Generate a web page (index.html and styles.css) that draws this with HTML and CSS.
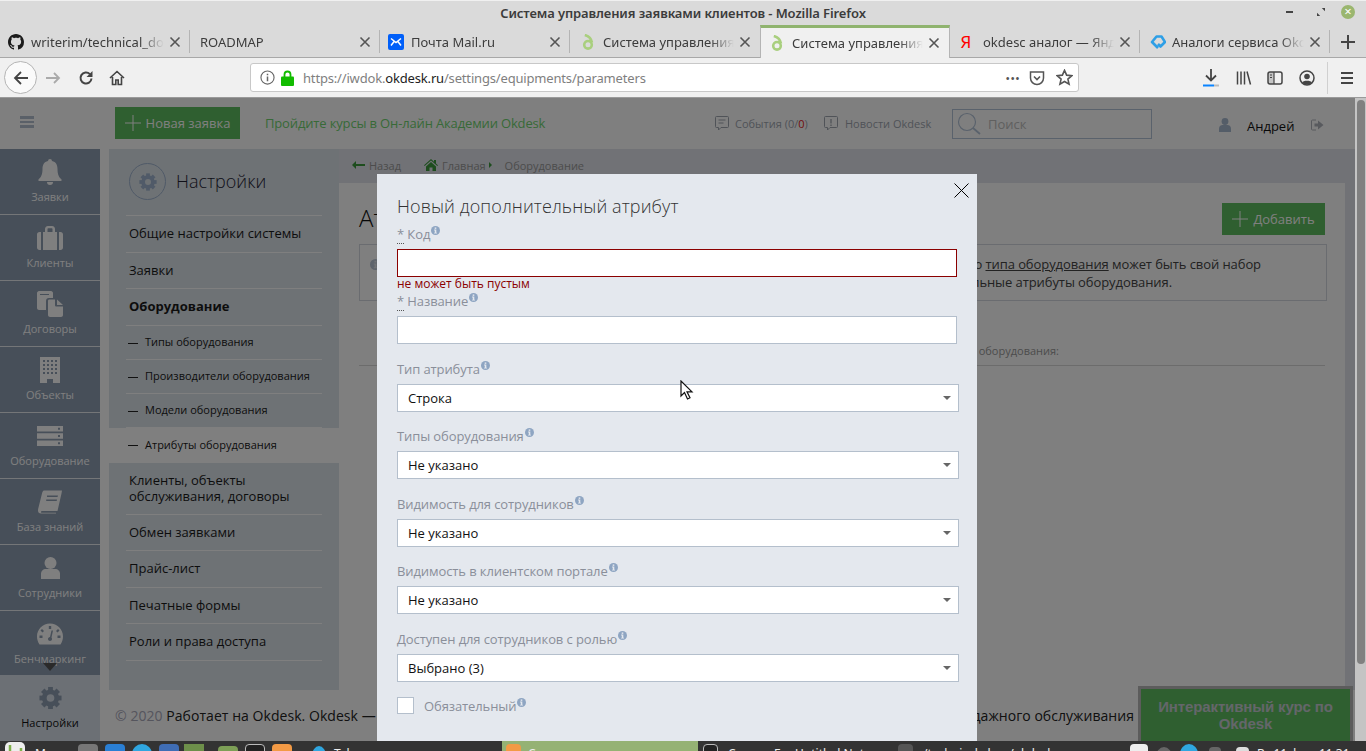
FILE: index.html
```html
<!DOCTYPE html>
<html lang="ru">
<head>
<meta charset="utf-8">
<title>Система управления заявками клиентов</title>
<link rel="stylesheet" href="styles.css">
</head>
<body>

<svg class="defs" width="0" height="0">
	<symbol id="i-info" viewBox="0 0 10 10"><circle cx="5" cy="5" r="5" fill="currentColor"/><rect x="4.1" y="1.6" width="1.8" height="1.6" fill="#e4e8ee"/><path d="M3.4 4h2.5v3.4h.8v1H3.400v-1h.8V5h-.8z" fill="#e4e8ee"/></symbol>
	<symbol id="i-gear" viewBox="0 0 24 24">
		<circle cx="12" cy="12" r="6.500" fill="none" stroke="currentColor" stroke-width="5"/>
		<g fill="currentColor">
			<rect x="9.500" y="0.500" width="5" height="5"/>
			<rect x="9.500" y="18.500" width="5" height="5"/>
			<rect x="0.500" y="9.500" width="5" height="5"/>
			<rect x="18.500" y="9.500" width="5" height="5"/>
			<rect x="9.500" y="0.500" width="5" height="5" transform="rotate(45 12 12)"/>
			<rect x="9.500" y="18.500" width="5" height="5" transform="rotate(45 12 12)"/>
			<rect x="0.500" y="9.500" width="5" height="5" transform="rotate(45 12 12)"/>
			<rect x="18.500" y="9.500" width="5" height="5" transform="rotate(45 12 12)"/>
		</g>
	</symbol>
	<symbol id="i-okdesk" viewBox="0 0 16 16"><circle cx="8" cy="10.800" r="3.800" fill="none" stroke="#a9cf7e" stroke-width="2.600"/><path d="M4.800 1c3.600 1 6.300 3 7.200 7.500" fill="none" stroke="#a9cf7e" stroke-width="2.600"/></symbol>
	<symbol id="i-close" viewBox="0 0 12 12"><path d="M1.500 1.500l9 9M10.500 1.500l-9 9" stroke="#555" stroke-width="1.600" fill="none"/></symbol>
	<symbol id="i-plus" viewBox="0 0 16 16"><path d="M8 0v16M0 8h16" stroke="currentColor" stroke-width="1" fill="none"/></symbol>
</svg>

<div class="titlebar">
	<span class="title-text">Система управления заявками клиентов - Mozilla Firefox</span>
	<div class="wm-btns">
		<span class="wm-min"></span>
		<svg class="wm-max" width="10" height="10" viewBox="0 0 10 10"><path d="M6 0h4v4zM0 6l4 4H0z" fill="#444"/></svg>
		<span class="wm-close">×</span>
	</div>
</div>

<div class="tabstrip">
	<div class="tab">
		<svg class="fav" viewBox="0 0 16 16"><path fill="#1b1b1b" d="M8 0C3.580 0 0 3.580 0 8c0 3.540 2.290 6.530 5.470 7.590.4.070.55-.17.55-.38 0-.19-.01-.82-.01-1.490-2.010.37-2.530-.49-2.690-.94-.09-.23-.48-.94-.82-1.130-.28-.15-.68-.52-.01-.53.63-.01 1.080.58 1.230.82.72 1.210 1.870.87 2.330.66.070-.52.28-.87.51-1.070-1.780-.2-3.640-.89-3.640-3.950 0-.87.31-1.590.82-2.150-.08-.2-.36-1.020.08-2.120 0 0 .67-.21 2.200.82.64-.18 1.320-.27 2-.27s1.360.09 2 .27c1.530-1.040 2.200-.82 2.200-.82.44 1.100.16 1.920.08 2.120.51.56.82 1.270.82 2.150 0 3.070-1.870 3.750-3.650 3.950.29.25.54.73.54 1.480 0 1.070-.01 1.930-.01 2.200 0 .21.15.46.55.38A8.010 8.010 0 0 0 16 8c0-4.420-3.580-8-8-8z"/></svg>
		<span class="tab-title">writerim/technical_docs</span>
		<svg class="tab-x"><use href="#i-close"/></svg>
	</div>
	<div class="tab tab-plain">
		<span class="tab-title">ROADMAP</span>
		<svg class="tab-x"><use href="#i-close"/></svg>
	</div>
	<div class="tab">
		<svg class="fav" viewBox="0 0 16 16"><rect width="16" height="16" rx="2" fill="#005ff9"/><path d="M3 4.500L8 8.500l5-4M3 11.500L6.500 7M13 11.500L9.500 7" stroke="#fff" stroke-width="1.500" fill="none"/></svg>
		<span class="tab-title">Почта Mail.ru</span>
		<svg class="tab-x"><use href="#i-close"/></svg>
	</div>
	<div class="tab tab-pre">
		<svg class="fav"><use href="#i-okdesk"/></svg>
		<span class="tab-title">Система управления заявками</span>
		<svg class="tab-x"><use href="#i-close"/></svg>
	</div>
	<div class="tab tab-active">
		<svg class="fav"><use href="#i-okdesk"/></svg>
		<span class="tab-title">Система управления заявками</span>
		<svg class="tab-x"><use href="#i-close"/></svg>
	</div>
	<div class="tab tab-post">
		<span class="fav fav-ya">Я</span>
		<span class="tab-title">okdesc аналог — Яндекс</span>
		<svg class="tab-x"><use href="#i-close"/></svg>
	</div>
	<div class="tab tab-last">
		<svg class="fav" viewBox="0 0 16 16"><path d="M8 14L2 8l4.500-5.500h5L15 8l-4.500 4.500L8 10" stroke="#2e9fe6" stroke-width="2.600" stroke-linejoin="round" fill="none"/></svg>
		<span class="tab-title">Аналоги сервиса Okdesk</span>
		<svg class="tab-x"><use href="#i-close"/></svg>
	</div>
	<div class="tab-new"><svg width="14" height="14" viewBox="0 0 14 14"><path d="M7 0v14M0 7h14" stroke="#444" stroke-width="2"/></svg></div>
</div>

<div class="navbar">
	<div class="nav-back"><svg width="18" height="18" viewBox="0 0 18 18"><path d="M16 9H3M9 3L3 9l6 6" stroke="#444" stroke-width="1.800" fill="none"/></svg></div>
	<svg class="nav-fwd" width="16" height="16" viewBox="0 0 16 16"><path d="M1 8h13M9 3l5 5-5 5" stroke="#aaa" stroke-width="1.800" fill="none"/></svg>
	<svg class="nav-reload" width="16" height="16" viewBox="0 0 16 16"><path d="M13.500 8.500a5.500 5.500 0 1 1-1.600-4.400" stroke="#444" stroke-width="2" fill="none"/><path d="M14.500 1v6h-6z" fill="#444"/></svg>
	<svg class="nav-home" width="16" height="16" viewBox="0 0 16 16"><path d="M1 8l7-6.500L15 8M3.500 7v7.500h3.300V10h2.400v4.500h3.300V7" stroke="#444" stroke-width="1.600" fill="none"/></svg>
	<div class="urlbar">
		<svg width="15" height="15" viewBox="0 0 16 16"><circle cx="8" cy="8" r="7" stroke="#666" stroke-width="1.200" fill="none"/><path d="M7.200 7h1.600v5H7.200zM7.200 4h1.600v1.600H7.200z" fill="#666"/></svg>
		<svg class="lock" width="13" height="16" viewBox="0 0 13 16"><path d="M3.500 7V4.500a3 3 0 0 1 6 0V7" stroke="#12bc00" stroke-width="1.800" fill="none"/><rect y="6.500" width="13" height="9.500" rx="1" fill="#12bc00"/></svg>
		<span class="url-text">https://iwdok.<b>okdesk.ru</b>/settings/equipments/parameters</span>
		<span class="url-dots">•••</span>
		<svg class="pocket" width="16" height="16" viewBox="0 0 16 16"><path d="M1.500 2h13v6a6.500 6.500 0 0 1-13 0z" stroke="#555" stroke-width="1.500" fill="none"/><path d="M5 6.500l3 3 3-3" stroke="#555" stroke-width="1.600" fill="none"/></svg>
		<svg class="star" width="17" height="17" viewBox="0 0 16 16"><path d="M8 1.300l2 4.500 4.900.5-3.700 3.200 1.100 4.800L8 11.800l-4.300 2.500 1.100-4.800L1.100 6.300 6 5.800z" stroke="#555" stroke-width="1.500" fill="none"/></svg>
	</div>
	<svg class="nav-dl" width="16" height="20" viewBox="0 0 16 20"><path d="M8 1v11M3 7.500l5 5 5-5" stroke="#444" stroke-width="1.800" fill="none"/><rect y="16.500" width="11" height="2" fill="#0a84ff"/><rect x="11" y="16.500" width="5" height="2" fill="#bbb"/></svg>
	<svg class="nav-lib" width="16" height="16" viewBox="0 0 16 16"><path d="M1.500 1.500v13M5 1.500v13M8.500 1.500v13M11 1.500l3.500 13" stroke="#444" stroke-width="1.500" fill="none"/></svg>
	<svg class="nav-side" width="16" height="16" viewBox="0 0 16 16"><rect x="1" y="2" width="14" height="12" rx="2" stroke="#444" stroke-width="1.500" fill="none"/><rect x="1" y="2" width="6" height="12" fill="#444" fill-opacity=".25"/><path d="M7 2v12M3 5h2M3 7.500h2" stroke="#444" stroke-width="1.200"/></svg>
	<svg class="nav-acct" width="16" height="16" viewBox="0 0 16 16"><circle cx="8" cy="8" r="7" stroke="#444" stroke-width="1.500" fill="none"/><circle cx="8" cy="6.500" r="2.800" fill="#444"/><path d="M3 12.500c1-2.500 9-2.500 10 0a6.500 6.500 0 0 1-10 0z" fill="#444"/></svg>
	<span class="nav-div"></span>
	<svg class="nav-menu" width="16" height="16" viewBox="0 0 16 16"><path d="M2 3h12M2 8h12M2 13h12" stroke="#444" stroke-width="1.800"/></svg>
</div>

<div class="page">
	<div class="app">
		<header class="topbar">
			<div class="burger"><i></i><i></i><i></i></div>
			<a class="btn btn-new"><svg width="16" height="16"><use href="#i-plus"/></svg>Новая заявка</a>
			<a class="promo">Пройдите курсы в Он-лайн Академии Okdesk</a>
			<a class="top-link top-events">
				<svg width="14" height="15" viewBox="0 0 14 15"><path d="M1.500.5h11a1 1 0 0 1 1 1v9a1 1 0 0 1-1 1H6l-2.500 2.500v-2.500h-2a1 1 0 0 1-1-1v-9a1 1 0 0 1 1-1z" stroke="currentColor" fill="none"/><path d="M3.500 4h7M3.500 7h5" stroke="currentColor"/></svg>
				<span>События (0/<em>0</em>)</span>
			</a>
			<a class="top-link top-news">
				<svg width="14" height="15" viewBox="0 0 14 15"><path d="M1.500.5h11a1 1 0 0 1 1 1v9a1 1 0 0 1-1 1H6l-2.500 2.500v-2.500h-2a1 1 0 0 1-1-1v-9a1 1 0 0 1 1-1z" stroke="currentColor" fill="none"/><path d="M7 3v4.500M7 8.500V10" stroke="currentColor" stroke-width="1.300"/></svg>
				<span>Новости Okdesk</span>
			</a>
			<div class="search">
				<svg width="26" height="26" viewBox="0 0 26 26"><circle cx="11" cy="11" r="8.500" stroke="currentColor" stroke-width="1.200" fill="none"/><path d="M17 17l7 6" stroke="currentColor" stroke-width="1.800"/></svg>
				<span>Поиск</span>
			</div>
			<svg class="top-user" width="12" height="14" viewBox="0 0 12 14"><circle cx="6" cy="3.500" r="3.400" fill="currentColor"/><path d="M0 14v-3.500C0 8 2 7 3.500 7h5C10 7 12 8 12 10.500V14z" fill="currentColor"/></svg>
			<span class="top-name">Андрей</span>
			<svg class="top-exit" width="13" height="12" viewBox="0 0 13 12"><path d="M5 1H1.500a1 1 0 0 0-1 1v8a1 1 0 0 0 1 1H5" stroke="currentColor" fill="none"/><path d="M3.500 4.500H7V1.500L12.500 6 7 10.500v-3H3.500z" fill="currentColor"/></svg>
		</header>

		<div class="layout">
			<nav class="rail">
				<a class="rail-item">
					<svg class="rail-ico" width="24" height="26" viewBox="0 0 24 26"><path d="M12 0a2 2 0 0 1 2 2c4 .8 5.500 4 5.500 8 0 6 1.500 8 4 10.500.4.500.1 1.500-.6 1.500H1.100c-.7 0-1-1-.6-1.500C3 18 4.500 16 4.500 10c0-4 1.500-7.200 5.500-8a2 2 0 0 1 2-2zM9 23a3 3 0 0 0 6 0z"/></svg>
					<span>Заявки</span>
				</a>
				<a class="rail-item">
					<svg class="rail-ico" width="26" height="24" viewBox="0 0 26 24"><path d="M8 6V3c0-1.500 1-3 3-3h4c2 0 3 1.500 3 3v3h-2.500V3c0-.5-.200-.7-.7-.7h-3.600c-.5 0-.7.200-.7.700v3zM6 6h14v18H6zM0 8.500C0 7 1 6 2.500 6H4v18H2.500C1 24 0 23 0 21.500zM22 6h1.500C25 6 26 7 26 8.500v13c0 1.500-1 2.500-2.500 2.500H22z"/></svg>
					<span>Клиенты</span>
				</a>
				<a class="rail-item">
					<svg class="rail-ico" width="26" height="26" viewBox="0 0 26 26"><path d="M2 0h12c1 0 2 1 2 2v5h-4c-2 0-3 1-3 3v9H2c-1 0-2-1-2-2V2C0 1 1 0 2 0z"/><path d="M11 10c0-1 .5-1.500 1.500-1.500H18V14c0 1 .5 1.500 1.500 1.500H26V24c0 1-1 2-2 2H13c-1 0-2-1-2-2zM20 8.500l6 5.500h-6z"/><path d="M3 3h9v1H3z" fill="#8e9eb2"/></svg>
					<span>Договоры</span>
				</a>
				<a class="rail-item">
					<svg class="rail-ico" width="20" height="26" viewBox="0 0 20 26"><path fill-rule="evenodd" d="M0 0h20v26h-7v-4H7v4H0zM3 3v2h2V3zm4 0v2h2V3zm4 0v2h2V3zm4 0v2h2V3zM3 7v2h2V7zm4 0v2h2V7zm4 0v2h2V7zm4 0v2h2V7zM3 11v2h2v-2zm4 0v2h2v-2zm4 0v2h2v-2zm4 0v2h2v-2zM3 15v2h2v-2zm4 0v2h2v-2zm4 0v2h2v-2zm4 0v2h2v-2z"/></svg>
					<span>Объекты</span>
				</a>
				<a class="rail-item">
					<svg class="rail-ico" width="26" height="20" viewBox="0 0 26 20"><path fill-rule="evenodd" d="M0 0h26v5.500H0zm21 1.800v2h2v-2zM0 7.200h26v5.500H0zm21 1.800v2h2V9zM0 14.500h26V20H0zm21 1.800v2h2v-2z"/></svg>
					<span>Оборудование</span>
				</a>
				<a class="rail-item">
					<svg class="rail-ico" width="24" height="23" viewBox="0 0 24 23"><path fill-rule="evenodd" d="M6 0h18l-.5 3-4 17.500H4.500c-1 0-1.500.3-1.500 1s.5.800 1.500.800H18V23H3c-2 0-3-1-3-3 0-1 .2-2 .5-3L4 3c.3-1.500 1-3 2-3zm3 5v1.500h10.500L20 5zm-.8 4v1.500h10.500L19 9z"/></svg>
					<span>База знаний</span>
				</a>
				<a class="rail-item">
					<svg class="rail-ico" width="19" height="22" viewBox="0 0 19 22"><circle cx="9.500" cy="6" r="6"/><path d="M0 22v-5c0-3 2-5 5-5h9c3 0 5 2 5 5v5z"/></svg>
					<span>Сотрудники</span>
				</a>
				<a class="rail-item rail-bench">
					<svg class="rail-ico" width="26" height="21" viewBox="0 0 26 21"><path fill-rule="evenodd" d="M13 0c7.200 0 13 5.800 13 13 0 3-1 5.800-2.500 8H2.500C1 18.800 0 16 0 13 0 5.800 5.800 0 13 0zM11.800 2.500v3h2.400v-3zM5 5.500L3.500 7l2 2L7 7.500zm16 0l-2 2L20.500 9l2-2zM2.500 12v2.400h3V12zm18 0v2.400h3V12zM14.500 7L13 13.500c-1.200 0-2 1-2 2s1 2 2 2 2-1 2-2c0-.6-.2-1-.5-1.400L16 7z"/></svg>
					<span>Бенчмаркинг</span>
				</a>
				<a class="rail-item rail-active">
					<svg class="rail-ico" width="23" height="23"><use href="#i-gear"/></svg>
					<span>Настройки</span>
				</a>
				<i class="rail-more"></i>
			</nav>

			<aside class="settings">
				<div class="settings-head">
					<div class="settings-ring"><svg width="18" height="18"><use href="#i-gear"/></svg></div>
					<h2>Настройки</h2>
				</div>
				<ul class="settings-list">
					<li>Общие настройки системы</li>
					<li>Заявки</li>
					<li class="cur">Оборудование</li>
					<li class="sub">Типы оборудования</li>
					<li class="sub">Производители оборудования</li>
					<li class="sub">Модели оборудования</li>
					<li class="sub on">Атрибуты оборудования</li>
					<li class="two">Клиенты, объекты<br>обслуживания, договоры</li>
					<li>Обмен заявками</li>
					<li>Прайс-лист</li>
					<li>Печатные формы</li>
					<li>Роли и права доступа</li>
				</ul>
			</aside>

			<main class="main">
				<div class="crumbs">
					<svg width="13" height="8" viewBox="0 0 13 8"><path d="M0 4l4-4v3h9v2H4v3z" fill="#3d9a3d"/></svg>
					<a class="crumb-back">Назад</a>
					<svg class="crumb-home" width="14" height="12" viewBox="0 0 14 12"><path d="M7 0l3 2.700V1h2v3.500L14 6.300l-.7.700L7 1.500.7 7 0 6.300zM2 7.500L7 3l5 4.500V12H8.500V8.500h-3V12H2z" fill="#3d9a3d"/></svg>
					<a class="crumb-main">Главная</a>
					<i class="crumb-sep"></i>
					<a class="crumb-cur">Оборудование</a>
				</div>
				<div class="content">
					<div class="content-head">
						<h1>Атрибуты оборудования</h1>
						<a class="btn btn-add"><svg width="16" height="16"><use href="#i-plus"/></svg>Добавить</a>
					</div>
					<div class="notice">
						<svg class="notice-ico" width="11" height="11"><use href="#i-info"/></svg>
						<div class="notice-text">
							<p class="l1">Для каждого <a>типа оборудования</a> может быть свой набор</p>
							<p class="l2">Здесь можно настроить дополнительные атрибуты оборудования.</p>
						</div>
					</div>
					<div class="hint">Атрибуты для типа оборудования:</div>
				</div>
			</main>
		</div>

		<footer class="foot">
			<span><span class="foot-year">© 2020</span> Работает на Okdesk. Okdesk — система</span>
			<span>автоматизации послепродажного обслуживания</span>
		</footer>

		<a class="course">Интерактивный курс по Okdesk</a>
	</div>

	<div class="scroll"><div class="scroll-thumb"></div></div>

	<div class="overlay"></div>

	<section class="modal">
		<svg class="modal-x" width="15" height="15" viewBox="0 0 15 15"><path d="M.5.500l14 14M14.500.500l-14 14" stroke="#000" fill="none"/></svg>
		<h3>Новый дополнительный атрибут</h3>
		<div class="field field-first">
			<label><abbr>*</abbr> Код<svg class="tip"><use href="#i-info"/></svg></label>
			<div class="input input-err"></div>
			<div class="err">не может быть пустым</div>
		</div>
		<div class="field field-tight">
			<label><abbr>*</abbr> Название<svg class="tip"><use href="#i-info"/></svg></label>
			<div class="input"></div>
		</div>
		<div class="field">
			<label>Тип атрибута<svg class="tip"><use href="#i-info"/></svg></label>
			<div class="select">Строка</div>
		</div>
		<div class="field">
			<label>Типы оборудования<svg class="tip"><use href="#i-info"/></svg></label>
			<div class="select">Не указано</div>
		</div>
		<div class="field">
			<label>Видимость для сотрудников<svg class="tip"><use href="#i-info"/></svg></label>
			<div class="select">Не указано</div>
		</div>
		<div class="field">
			<label>Видимость в клиентском портале<svg class="tip"><use href="#i-info"/></svg></label>
			<div class="select">Не указано</div>
		</div>
		<div class="field">
			<label>Доступен для сотрудников с ролью<svg class="tip"><use href="#i-info"/></svg></label>
			<div class="select">Выбрано (3)</div>
		</div>
		<div class="check">
			<span class="box"></span>
			<label>Обязательный<svg class="tip"><use href="#i-info"/></svg></label>
		</div>
	</section>

	<svg class="pointer" width="14" height="21" viewBox="0 0 14 21"><path d="M1 1v15l3.500-3.500L7.500 19l2.500-1.200-3-6H12z" fill="#fff" stroke="#111" stroke-width="1.200"/></svg>
</div>

<div class="taskbar">
	<svg class="t-mint" width="22" height="20" viewBox="0 0 22 20"><rect x="1" y="1" width="20" height="18" rx="5" fill="#eee"/><path d="M6 4v8c0 2 1 3 3 3h5c2 0 3-1 3-3V7" stroke="#7fb04a" stroke-width="2.500" fill="none"/></svg>
	<span class="t-text t-menu">Меню</span>
	<span class="t-ico t-gray"></span>
	<span class="t-ico t-code"></span>
	<span class="t-ico t-tg"></span>
	<span class="t-ico t-blue"></span>
	<span class="t-ico t-green"></span>
	<span class="t-ico t-folder"></span>
	<span class="t-ico t-term"></span>
	<span class="t-ico t-orange"></span>
	<span class="t-ico t-tg2"></span>
	<span class="t-text t-tel">Telegram</span>
	<div class="t-window">
		<span class="t-ico t-orange2"></span>
		<span class="t-text">Система управления</span>
	</div>
	<span class="t-ico t-term2"></span>
	<span class="t-text t-old">Старые Em Untitled Notes</span>
	<span class="t-ico t-sublime"></span>
	<span class="t-text t-path">/technical_docs/okdesk</span>
	<span class="t-ico t-shield"></span>
	<span class="t-ico t-round"></span>
	<span class="t-ico t-round2"></span>
	<span class="t-ico t-sound"></span>
	<span class="t-ico t-batt"></span>
	<span class="t-text t-clock">Вт 11 фев, 11:31</span>
</div>

</body>
</html>
```

FILE: styles.css
```css
html, body {
	margin: 0;
	padding: 0;
	height: 100%;
	overflow: hidden;
}
body {
	display: flex;
	flex-direction: column;
	width: 1366px;
	height: 751px;
	font-family: "Open Sans", "Noto Sans", sans-serif;
	font-size: 13px;
	color: #222;
	background: #333;
}
a {
	color: inherit;
	text-decoration: none;
}
ul, h1, h2, h3, p {
	margin: 0;
	padding: 0;
}
.defs {
	display: block;
	height: 0;
}

/* firefox window */
.titlebar {
	height: 25px;
	flex: none;
	display: flex;
	align-items: center;
	justify-content: center;
	background: #dadada;
	border-top: 1px solid #f0f0f0;
	box-sizing: border-box;
	position: relative;
	font-family: "Noto Sans", sans-serif;
}
.title-text {
	font-size: 13px;
	font-weight: 600;
	letter-spacing: -.11px;
	color: #3c3c3c;
}
.wm-btns {
	position: absolute;
	right: 11px;
	top: 4px;
	display: flex;
	align-items: center;
}
.wm-min {
	width: 7px;
	height: 2px;
	background: #444;
}
.wm-max {
	margin-left: 24px;
	width: 8px;
	height: 8px;
}
.wm-close {
	margin-left: 16px;
	width: 14px;
	height: 14px;
	line-height: 13px;
	text-align: center;
	border-radius: 50%;
	background: #9ab66f;
	color: #fff;
	font-size: 13px;
}
.tabstrip {
	height: 33px;
	flex: none;
	display: flex;
	background: #dadada;
	border-bottom: 1px solid #a8a8a8;
	box-sizing: border-box;
	font-family: "Noto Sans", sans-serif;
}
.tab {
	width: 190px;
	height: 32px;
	flex: none;
	display: flex;
	align-items: center;
	box-sizing: border-box;
	padding: 2px 9px 0 8px;
	position: relative;
	color: #3c3c3c;
	font-size: 13px;
}
.tab::after {
	content: "";
	position: absolute;
	right: 0;
	top: 5px;
	bottom: 4px;
	width: 1px;
	background: #b4b4b4;
}
.tab-pre::after,
.tab-active::after {
	display: none;
}
.tab-active {
	background: #f0f0f0;
	border-top: 3px solid #8fb36e;
	border-left: 1px solid #b4b4b4;
	border-right: 1px solid #b4b4b4;
	height: 33px;
	padding-top: 0;
}
.tab-plain {
	padding-left: 10px;
}
.tab-pre .fav {
	margin-left: 2px;
	margin-right: 7px;
}
.tab-last {
	padding-left: 10px;
}
.tab-last .fav {
	margin-right: 6px;
}
.tab-post .fav-ya {
	margin-right: 9px;
}
.fav {
	width: 16px;
	height: 16px;
	flex: none;
	margin-right: 7px;
}
.fav-ya {
	color: #f00;
	font-size: 17px;
	line-height: 16px;
	text-align: center;
}
.tab-title {
	flex: 1;
	min-width: 0;
	white-space: nowrap;
	overflow: hidden;
	-webkit-mask-image: linear-gradient(to right, #000 82%, transparent 100%);
	mask-image: linear-gradient(to right, #000 82%, transparent 100%);
}
.tab-x {
	width: 12px;
	height: 12px;
	flex: none;
	margin-left: 5px;
}
.tab-new {
	flex: 1;
	display: flex;
	align-items: center;
	justify-content: center;
	padding-top: 1px;
}
.navbar {
	height: 40px;
	flex: none;
	display: flex;
	align-items: center;
	box-sizing: border-box;
	padding-left: 4px;
	background: #f0f0f0;
	border-bottom: 1px solid #9a9a9a;
}
.nav-back {
	width: 33px;
	height: 33px;
	box-sizing: border-box;
	border: 1px solid #b4b4b4;
	border-radius: 50%;
	background: #fafafa;
	display: flex;
	align-items: center;
	justify-content: center;
}
.nav-fwd { margin-left: 8px; }
.nav-reload { margin-left: 17px; }
.nav-home { margin-left: 15px; }
.urlbar {
	margin-left: 125px;
	width: 829px;
	height: 29px;
	box-sizing: border-box;
	display: flex;
	align-items: center;
	padding: 0 5px 0 9px;
	background: #fff;
	border: 1px solid #c8c8c8;
	border-radius: 3px;
}
.lock { margin-left: 6px; }
.url-text {
	flex: 1;
	margin-left: 9px;
	font-family: "Noto Sans", sans-serif;
	font-size: 13px;
	letter-spacing: -.17px;
	color: #808080;
}
.url-text b {
	font-weight: 400;
	color: #222;
}
.url-dots {
	font-size: 13px;
	letter-spacing: 0;
	color: #555;
}
.pocket { margin-left: 9px; }
.star { margin-left: 11px; }
.nav-dl { margin-left: 124px; }
.nav-lib { margin-left: 17px; }
.nav-side { margin-left: 15px; }
.nav-acct { margin-left: 16px; }
.nav-div {
	margin-left: 12px;
	width: 1px;
	height: 32px;
	background: #d0d0d0;
}
.nav-menu { margin-left: 11px; }

/* page under the dialog */
.page {
	flex: 1;
	min-height: 0;
	display: flex;
	position: relative;
	overflow: hidden;
	background: #fff;
}
.app {
	width: 1355px;
	flex: none;
	display: flex;
	flex-direction: column;
	background: #fff;
	position: relative;
}
.scroll {
	flex: 1;
	background: #c4c4c4;
	padding: 2px 1px 0 2px;
}
.scroll-thumb {
	height: 564px;
	background: #808080;
	border-radius: 4px;
}
.overlay {
	position: absolute;
	left: 0;
	top: 0;
	width: 1355px;
	bottom: 0;
	background: rgba(0, 0, 0, .5);
}
.topbar {
	height: 51px;
	flex: none;
	box-sizing: border-box;
	padding: 0 0 1px 20px;
	display: flex;
	align-items: center;
}
.burger {
	width: 14px;
}
.burger i {
	display: block;
	height: 2.500px;
	margin-bottom: 2px;
	background: #b4c0d0;
}
.btn {
	display: flex;
	align-items: center;
	justify-content: center;
	box-sizing: border-box;
	height: 32px;
	background: #5fbf60;
	color: #fff;
	font-size: 13px;
}
.btn svg {
	margin-right: 5px;
}
.btn-new {
	margin-left: 81px;
	width: 125px;
}
.promo {
	margin-left: 25px;
	color: #70d470;
	font-size: 13px;
	letter-spacing: -.15px;
	width: 280px;
	white-space: nowrap;
}
.top-link {
	display: flex;
	align-items: center;
	font-size: 11px;
	color: #a0a6b0;
	white-space: nowrap;
}
.top-link svg {
	margin-right: 6px;
}
.top-link em {
	font-style: normal;
	color: #e02020;
}
.top-events {
	margin-left: 170px;
	width: 109px;
}
.top-news {
	width: 128px;
}
.top-news svg {
	margin-right: 7px;
}
.search {
	width: 200px;
	height: 30px;
	margin-top: 1px;
	box-sizing: border-box;
	border: 1px solid #b4c4d8;
	display: flex;
	align-items: center;
	color: #b4c4d8;
	padding-left: 3px;
}
.search span {
	margin-left: 6px;
	color: #c0c0c0;
	font-size: 13px;
}
.top-user {
	margin-left: 67px;
	margin-top: 3px;
	color: #a8bad0;
}
.top-name {
	margin-left: 16px;
	margin-top: 6px;
	width: 64px;
	color: #111;
	font-size: 13px;
}
.top-exit {
	margin-top: 3px;
	color: #b0b4bc;
}
.layout {
	flex: none;
	height: 541px;
	display: flex;
}

/* left rail */
.rail {
	width: 100px;
	height: 592px;
	flex: none;
	background: #8e9eb2;
	position: relative;
	display: flex;
	flex-direction: column;
}
.rail-item {
	height: 66px;
	flex: none;
	box-sizing: border-box;
	padding-top: 9px;
	border-bottom: 1px solid #e8ecf0;
	display: flex;
	flex-direction: column;
	align-items: center;
	color: #fff;
	font-size: 11px;
	line-height: 16px;
	overflow: hidden;
}
.rail-ico {
	height: 28px;
	margin-bottom: 3px;
	flex: none;
	fill: #fff;
}
.rail-bench {
	height: 64px;
	border-bottom: 0;
}
.rail-active {
	background: #d8e0ea;
	color: #111;
	border-bottom: 0;
	height: 53px;
	flex: 1;
}
.rail-active .rail-ico {
	color: #8e9eb2;
}
.rail-more {
	position: absolute;
	left: 43px;
	top: 514px;
	border-left: 7px solid transparent;
	border-right: 7px solid transparent;
	border-top: 8px solid #555;
}

/* settings menu */
.settings {
	width: 230px;
	flex: none;
	margin-left: 9px;
	background: #dce4ea;
	box-sizing: border-box;
	padding-top: 14px;
}
.settings-head {
	display: flex;
	align-items: center;
	height: 37px;
	padding-left: 20px;
	margin-bottom: 15px;
}
.settings-ring {
	width: 37px;
	height: 37px;
	box-sizing: border-box;
	border: 1px solid #a0b4d0;
	border-radius: 50%;
	color: #a0b4d0;
	display: flex;
	align-items: center;
	justify-content: center;
}
.settings-head h2 {
	margin: -2px 0 0 10px;
	font-size: 18px;
	font-weight: 300;
	color: #223;
}
.settings-list {
	list-style: none;
	border-top: 1px solid #fff;
	margin: 0 17px;
}
.settings-list li {
	height: 36.500px;
	box-sizing: border-box;
	padding-left: 3px;
	line-height: 35.500px;
	border-bottom: 1px solid #fff;
	color: #1a1a1a;
	font-size: 13px;
}
.settings-list .sub {
	height: 34px;
	line-height: 32px;
	font-size: 11px;
	padding-left: 19px;
	position: relative;
}
.settings-list .cur {
	font-weight: 700;
}
.settings-list .sub::before {
	content: "";
	position: absolute;
	left: 2px;
	top: 17px;
	width: 10px;
	height: 1px;
	background: #222;
}
.settings-list .on {
	height: 35px;
	line-height: 33px;
	margin: 0 -17px;
	padding-left: 36px;
	background: #fff;
	border-bottom: 0;
}
.settings-list .on::before {
	left: 19px;
}
.settings-list .two {
	height: 52px;
	line-height: 16px;
	padding-top: 9px;
}

/* content */
.main {
	flex: 1;
	min-width: 0;
	display: flex;
	flex-direction: column;
	background: #e2e4ec;
}
.crumbs {
	height: 34px;
	flex: none;
	box-sizing: border-box;
	display: flex;
	align-items: center;
	padding: 0 0 2px 13px;
	font-size: 11px;
	color: #999;
}
.crumb-back { margin-left: 4px; }
.crumb-home { margin-left: 23px; }
.crumb-main { margin-left: 4px; }
.crumb-sep {
	margin-left: 3px;
	border-left: 3px solid #3d9a3d;
	border-top: 3px solid transparent;
	border-bottom: 3px solid transparent;
}
.crumb-cur { margin-left: 13px; }
.content {
	flex: 1;
	margin-right: 10px;
	background: #fff;
	box-sizing: border-box;
	padding: 20px 18px 0 20px;
}
.content-head {
	display: flex;
	justify-content: space-between;
	align-items: center;
	height: 32px;
	margin-right: 2px;
}
.content-head h1 {
	font-size: 24px;
	font-weight: 300;
	color: #111;
	margin-top: -4px;
}
.btn-add {
	width: 103px;
}
.notice {
	margin-top: 9px;
	height: 57px;
	box-sizing: border-box;
	border: 1px solid #d4d8e0;
	display: flex;
	position: relative;
	padding: 10px 0 0 10px;
	color: #999;
}
.notice-ico {
	margin-top: 4px;
	color: #bcc8d8;
	flex: none;
}
.notice-text {
	flex: 1;
	text-align: right;
	font-size: 13px;
	letter-spacing: -.08px;
	line-height: 18px;
	color: #444;
	white-space: nowrap;
	overflow: hidden;
}
.notice-text .l1 { padding-right: 65px; }
.notice-text .l2 { padding-right: 154px; }
.notice-text a { text-decoration: underline; }
.hint {
	margin-top: 36px;
	height: 29px;
	margin-right: 2px;
	box-sizing: border-box;
	padding-right: 266px;
	text-align: right;
	font-size: 11px;
	line-height: 27px;
	color: #999;
	border-bottom: 1px solid #d8d8d8;
}
.foot {
	height: 51px;
	box-sizing: border-box;
	margin-left: 115px;
	padding-right: 221px;
	display: flex;
	justify-content: space-between;
	align-items: center;
	font-size: 14px;
	letter-spacing: .05px;
	color: #222;
	white-space: nowrap;
}
.foot-year { color: #aab; }
.course {
	position: absolute;
	left: 1138px;
	top: 588px;
	width: 215px;
	height: 60px;
	box-sizing: border-box;
	padding: 9px 12px 0;
	background: #5fbf60;
	border: 3px solid #b8b8b8;
	border-bottom: 0;
	color: #c8ccd4;
	font-family: "Liberation Sans", Arial, sans-serif;
	font-weight: 700;
	font-size: 15px;
	letter-spacing: -.12px;
	line-height: 17px;
	text-align: center;
}

/* dialog */
.modal {
	position: absolute;
	left: 377px;
	top: 76px;
	width: 600px;
	height: 580px;
	box-sizing: border-box;
	padding: 21px 18px 0 20px;
	background: #e4e8ee;
}
.modal-x {
	position: absolute;
	right: 8px;
	top: 9px;
}
.modal h3 {
	font-size: 18px;
	line-height: 22px;
	font-weight: 300;
	letter-spacing: .1px;
	color: #333;
}
.field {
	margin-top: 15.500px;
}
.field-first {
	margin-top: 8px;
}
.field-tight {
	margin-top: 0;
}
.field label,
.check label {
	display: block;
	height: 18px;
	line-height: 18px;
	font-size: 13px;
	letter-spacing: -.1px;
	color: #8a8f9a;
	margin-bottom: 6px;
}
.field abbr {
	border-bottom: 1px dotted #555;
}
.tip {
	width: 9px;
	height: 9px;
	margin-left: 1px;
	vertical-align: 4px;
	color: #8ea5c2;
}
.input,
.select {
	height: 28px;
	box-sizing: border-box;
	background: #fff;
	border: 1px solid #b4bfcc;
}
.input {
	width: 560px;
}
.input-err {
	border-color: #8b0000;
}
.err {
	height: 15px;
	line-height: 14px;
	font-size: 12px;
	color: #8b0000;
}
.select {
	width: 562px;
	padding-left: 10px;
	line-height: 26px;
	font-size: 13px;
	color: #111;
	position: relative;
}
.select::after {
	content: "";
	position: absolute;
	right: 7px;
	top: 11px;
	border-left: 4px solid transparent;
	border-right: 4px solid transparent;
	border-top: 4px solid #666;
}
.check {
	margin-top: 15px;
	display: flex;
	align-items: flex-start;
}
.box {
	width: 17px;
	height: 17px;
	box-sizing: border-box;
	background: #fff;
	border: 1px solid #b4bfcc;
}
.check label {
	margin-left: 10px;
	margin-bottom: 0;
}
.pointer {
	position: absolute;
	left: 680px;
	top: 282px;
}

/* desktop panel */
.taskbar {
	height: 10px;
	flex: none;
	display: flex;
	align-items: flex-start;
	overflow: hidden;
	background: #333;
	color: #eee;
	font-family: "Noto Sans", sans-serif;
	font-size: 12px;
}
.t-mint {
	margin-left: 4px;
	flex: none;
}
.t-text {
	white-space: nowrap;
	line-height: 20px;
	margin-top: 3px;
}
.t-menu { margin-left: 9px; width: 43px; }
.t-ico {
	display: block;
	flex: none;
	width: 20px;
	height: 20px;
	margin-top: 3px;
	border-radius: 4px;
}
.t-gray { background: #777; }
.t-code { margin-left: 7px; background: #2a7fd4; }
.t-tg { margin-left: 7px; background: #2fa6e0; border-radius: 50%; }
.t-blue { margin-left: 7px; background: #3f6db5; }
.t-green { margin-left: 5px; background: #6d8f4a; border-radius: 0; }
.t-folder { margin-left: 14px; background: #7d9f56; margin-top: 5px; }
.t-term { margin-left: 7px; background: #222; border: 1px solid #bbb; box-sizing: border-box; }
.t-orange { margin-left: 7px; background: #f39a45; }
.t-tg2 { margin-left: 20px; width: 14px; margin-top: 5px; background: #2fa6e0; border-radius: 50%; }
.t-tel { margin-left: 8px; width: 168px; }
.t-window {
	width: 196px;
	height: 10px;
	display: flex;
	flex: none;
	background: #95b274;
}
.t-orange2 { margin-left: 4px; width: 15px; background: #f39a45; }
.t-window .t-text { margin-left: 7px; }
.t-term2 { margin-left: 5px; width: 15px; background: #222; border: 1px solid #bbb; box-sizing: border-box; }
.t-old { margin-left: 10px; width: 170px; overflow: hidden; }
.t-sublime { width: 15px; background: #555; }
.t-path { margin-left: 10px; width: 207px; overflow: hidden; }
.t-shield { width: 18px; background: #eee; }
.t-round { margin-left: 8px; width: 16px; background: #666; border-radius: 50%; margin-top: 6px; }
.t-round2 { margin-left: 8px; width: 18px; background: #2fa6e0; border-radius: 50%; }
.t-sound { margin-left: 11px; width: 12px; background: #666; margin-top: 6px; }
.t-batt { margin-left: 15px; width: 13px; background: #ddd; margin-top: 6px; }
.t-clock { margin-left: 8px; }
```
